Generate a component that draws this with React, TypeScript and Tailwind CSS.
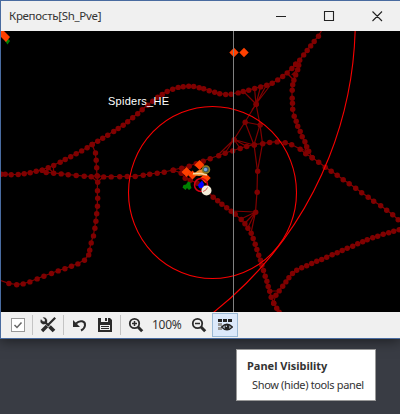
import React from "react";

type Point = [number, number];

const parse = (s: string): Point[] =>
  s.trim().split(/\s+/).map((p) => p.split(",").map(Number) as Point);

// Waypoint trails, drawn as linked dots.
const trails: Point[][] = [
  "1,174 5,174 11,174.5 18,174.3 24,173.5 30,172.5 36,171 42,170 48,167.5 53.5,165.3 60,162 65,159.3 70.5,156.5 76,153.5 81.5,150.7 87,147.5 92,144.3 97.5,141 102.5,138 107.5,135 113.5,131.3 118,128.3 123,125 127.5,121.5 132.5,117.5 137.5,113.5 142,109.5 147.5,105 152.5,101 157.5,97 162,94.3 167,91.3 172.5,89 178,87.2 183,86.5 188.5,86 193.5,86.3 199,87.5 203.5,88.5 209,90.5 214.5,92 219.5,93.5 225.5,94.3 231,94 238,92.7 243,91.3 248.5,90 254.5,88.3 260.5,86.7 266.5,85 272,83 277.5,79.7 282.5,76.3 287,72.7 291.7,68.3 295.5,64 299.5,60 303.5,54.7 307,50.3 310.5,45.7 314,41.3 318.3,36",
  "295.5,64 298.5,65 297.5,69.5 295.5,74.7 293.7,80 292.5,84.5 292,90 292,98 292.3,103 292.5,109 294,116 296,121 297.5,126 300,131.3 302,136.5 304.7,141.5 306.5,146.5 308.5,151 312,157.5",
  "42,170 46,172.3 53.5,173 61,173.7 68,174.5 76,175.3 84,176 91,176.5 97,175.7 103.5,176.7 111,176.7 119.5,176.5 127,176.3 135,176.3 143,175 149.5,174 157,173 164,172 173,170 181.5,168 189,166 196,163.5 203,161 210,158.5 218.5,155.5 225,153 232.5,150.7 240,148.3 246.5,146.3 254,144.7 262.5,143.5 269.5,142.3 277,141.7 285,142.5 291.5,144.5 300,149 305.5,153.5 312,157.5 318.5,162 325,167 331,171 337,175 343,179.5 349,183.5 355.5,188 361.5,192.5 368,197 373.5,201 380.5,205.5 386.5,210 392.5,214.5 398,219.5",
  "92,144.3 95.3,152.7 96,160 96.5,167.5 97,175.7 97.5,182 97.3,190.5 97.5,198 97.3,206 96.5,213.5 95.7,221 94.7,228 93.3,235.7 91,242.7 89.5,250 88.5,254.7 84.3,260 77.7,263.7 71.3,266 64.7,268.5 58,270.7 51.3,273.3 43.7,276 37,278.7 29.7,281.7 23,283.7 16.5,284.5 8.7,283.3 -2,279.5",
  "173,170 181,173 185,178 190,180 197,183 202,187 207,191 213,197 217.5,200.5 221.7,204 226.5,207.5 231,211 235,214 241,219.3 244.7,223.5 247.7,228 251,233 253,238.3 255,244 256.7,249.3 258.5,255 260.3,260 261.7,265 263.3,270.3 265,276 266.7,281 268,286.3 269.5,291 271,297 273.5,303 276.5,308 279,312",
  "399,229.5 393.5,231 388.5,232.5 383,234 377.5,236 372.5,237.5 367,239.5 362.5,241.5 357.5,243.5 352.5,246 347,248 342,250.3 337,252.5 332,254.5 326.5,257 321.5,259.3 316.5,261 311.5,263.3 306.5,265.5 301.5,267.5 296.5,270 292.3,273.3 288.7,277.5 285.7,281.7 282.5,286 279,290.7 275.7,295 273.5,303",
  "256,104 245,122 234,139.5",
  "256,104 260,124.7 254,144.7 257.5,171 257,192 255.5,212",
].map(parse);

// Cross links between waypoints, drawn without dots.
const links =
  "M318.3 36L322 30M243 91L256 104M254.5 88L256 104M260.5 87L256 104M266.5 85L256 104M272 83L256 104M245 122L260 125M245 122L254 145M260 125L262.5 143.5L257.5 171M234 139.5L254 145M234 139.5L218 155M234 139.5L225 153M234 139.5L240 148M234 139.5L246 146M256 104L252 110M255.5 212L231 211M255.5 212L241 219M255.5 212L244.7 223.5M255.5 212L247.7 228M255.5 212L251 233M269 291L279 291M271 297L275.7 295M287 73L293.7 80M291.7 75L297 70M53.5 165V173M48 167.5L53.5 173M91 176.5L97.5 182L103.5 176.7M300 149L308 151M306 153L304.7 141.5";

const Diamond = ({ x, y, r = 4.7 }: { x: number; y: number; r?: number }) => (
  <path d={`M${x - r} ${y}L${x} ${y - r}L${x + r} ${y}L${x} ${y + r}Z`} fill="#ff4000" />
);

function RadarMap() {
  return (
    <svg className="block h-[281px] w-[399px] bg-black" viewBox="1 31 399 281">
      <g stroke="#800000" fill="none" strokeWidth="1.2">
        {trails.map((t, i) => (
          <polyline key={i} points={t.map((p) => p.join(",")).join(" ")} />
        ))}
        <path d={links} />
      </g>
      <g fill="#800000">
        {trails.flat().map(([x, y], i) => (
          <circle key={i} cx={x + 0.2} cy={y + 0.2} r="2.7" />
        ))}
      </g>
      <g fill="none" stroke="#f80000" strokeWidth="1.1">
        <ellipse cx="212.5" cy="192.5" rx="84" ry="86" />
        <circle cx="-17" cy="20" r="372.3" />
      </g>
      <Diamond x={234} y={52.5} />
      <Diamond x={244} y={52.5} />
      <path d="M233.5 31V312" stroke="#808080" />
      <path d="M5 41L8 38.500L10 41L7.500 44.500Z" fill="#008000" />
      <path d="M1 31H4L10 37L6 42L1 37Z" fill="#ff4000" />
      <path d="M188 181.500L190.500 182.500L190.500 185L191.500 188L189 190L187 188L185.500 190L182.500 187.500L183.500 185L186 184.500Z" fill="#008000" />
      <Diamond x={186.5} y={172} r={5} />
      <Diamond x={199.5} y={165} r={5} />
      <Diamond x={192.5} y={175} r={4.5} />
      <Diamond x={205.5} y={178} r={5.2} />
      <path d="M192 175L198 170.500L204 168.500L206 175L199 176Z" fill="#ef8a2c" />
      <path d="M193 173.500H201L207 175" stroke="#f2dba7" fill="none" strokeWidth="1.5" />
      <circle cx="206" cy="169.500" r="3.500" fill="#3c5568" stroke="#8a7a1c" strokeWidth="1.500" />
      <circle cx="205.500" cy="169.500" r="1.700" fill="#69a9e0" />
      <circle cx="201" cy="185" r="6.500" fill="none" stroke="#d50012" strokeWidth="1.500" />
      <path d="M198 185L202 180.500L204 184L203 188H199Z" fill="#0000ff" />
      <circle cx="206.500" cy="190.500" r="5" fill="#f4edda" />
      <path d="M203 191.500Q206 191 207.500 187.500" stroke="#cc3b31" strokeWidth=".8" fill="none" />
      <text x="108" y="105" fill="#fff" fontSize="11" textLength="61" className="font-['Liberation_Sans',Arial,sans-serif]">Spiders_HE</text>
    </svg>
  );
}

const Separator = () => <div className="h-5 w-px bg-[#c4c4c4]" />;

const Magnifier = ({ plus }: { plus?: boolean }) => (
  <svg className="size-4" viewBox="0 0 16 16" fill="none" stroke="#2b2b2b">
    <circle cx="6.500" cy="6.500" r="4.700" strokeWidth="1.800" />
    <path d="M10 10L14.200 14.200" strokeWidth="3" />
    <path d={plus ? "M4 6.500H9M6.500 4V9" : "M4 6.500H9"} strokeWidth="1.500" />
  </svg>
);

function Toolbar() {
  return (
    <div className="flex h-[26px] items-center bg-[#f0f0f0]">
      <svg className="ml-[10px] size-[14px]" viewBox="0 0 14 14" fill="none">
        <rect x=".5" y=".5" width="13" height="13" fill="#fff" stroke="#999" />
        <path d="M3.500 7L6 9.500L10.500 4.500" stroke="#666" strokeWidth="1.500" />
      </svg>
      <div className="ml-[7px]"><Separator /></div>
      <svg className="ml-[7px] size-4" viewBox="0 0 16 16" fill="none" stroke="#2b2b2b">
        <path d="M5 5L9 9" strokeWidth="2.200" />
        <path d="M9.500 9.500L14 14" strokeWidth="3.800" />
        <path d="M3 .5L5 2.500V4.500H3L1 2.500C-.5 6 2.500 8 5.500 6.800C8.500 5 7 0 3 .5Z" fill="#2b2b2b" strokeWidth=".3" />
        <path d="M15.200 .8L8 8" strokeWidth="2.200" />
        <path d="M7 9L2 14" strokeWidth="3.400" />
      </svg>
      <div className="ml-[7px]"><Separator /></div>
      <svg className="ml-2 size-4" viewBox="0 0 16 16" fill="none">
        <path d="M4 6.500C8 2.500 13.500 4 13 8.500C12.700 11 11 12.500 9 13.500" stroke="#2b2b2b" strokeWidth="2" />
        <path d="M1 3V10H8Z" fill="#2b2b2b" />
      </svg>
      <svg className="ml-[10px] size-[14px]" viewBox="0 0 14 14">
        <path fillRule="evenodd" d="M0 0H12L14 2V14H0ZM3 0V4H10V0ZM2 7V12H12V7Z" fill="#2b2b2b" />
        <path d="M7 0H9V3H7ZM3 8H11V9H3ZM3 10H11V11H3Z" fill="#2b2b2b" />
      </svg>
      <div className="ml-2"><Separator /></div>
      <div className="ml-[7px]"><Magnifier plus /></div>
      <span className="ml-2 w-[31px] whitespace-nowrap font-['Noto_Sans',sans-serif] text-[12px] tracking-[-0.3px] text-[#333]">100%</span>
      <div className="ml-2"><Magnifier /></div>
      <div className="ml-[5px] flex h-6 w-[26px] items-center justify-center border border-[#9bb9d5] bg-[#dce9fb]">
        <svg className="size-4" viewBox="0 0 16 16" fill="none">
          <path d="M1 2H5V5H1ZM6 2H10V5H6ZM11 2H15V5H11Z" fill="#222" />
          <path d="M1 6H5V9H1ZM1 10H5V13H1Z" fill="#999" />
          <path d="M4.700 10Q10 4.300 15.300 10Q10 15.700 4.700 10Z" fill="#dce9fb" stroke="#222" strokeWidth="1.500" />
          <circle cx="10" cy="10" r="2.500" fill="#222" />
          <circle cx="9.300" cy="9.200" r=".7" fill="#dce9fb" />
        </svg>
      </div>
    </div>
  );
}

export default function App() {
  return (
    <div className="relative h-[414px] w-[400px] overflow-hidden bg-[#393c44]">
      <div className="h-[339px] border-y border-l border-[#496ba0] bg-[#f0f0f0] shadow-[0_2px_12px_rgba(0,0,0,0.5)]">
        <header className="flex h-[30px] items-center pl-2 text-[#333]">
          <h1 className="whitespace-nowrap font-['Noto_Sans',sans-serif] text-[11.5px] tracking-[-0.3px]">Крепость[Sh_Pve]</h1>
          <svg className="ml-auto mr-[17px] h-[11px] w-[107px]" viewBox="0 0 107 11" fill="none" stroke="#222">
            <path d="M0 5.500H10M48.500 .5H57.500V9.500H48.500ZM96.500 .5L106 10M106 .5L96.500 10" strokeWidth="1.100" />
          </svg>
        </header>
        <RadarMap />
        <Toolbar />
      </div>
      <div role="tooltip" className="absolute left-[236px] top-[349px] flex h-[52px] w-[140px] flex-col border border-[#999] bg-white pl-[10px] pt-[7px] font-['Noto_Sans',sans-serif] text-[#333]">
        <strong className="whitespace-nowrap text-[11px] leading-[18px]">Panel Visibility</strong>
        <span className="whitespace-nowrap pl-[5px] text-[11px] leading-[19px] tracking-[-0.35px]">Show (hide) tools panel</span>
      </div>
    </div>
  );
}
